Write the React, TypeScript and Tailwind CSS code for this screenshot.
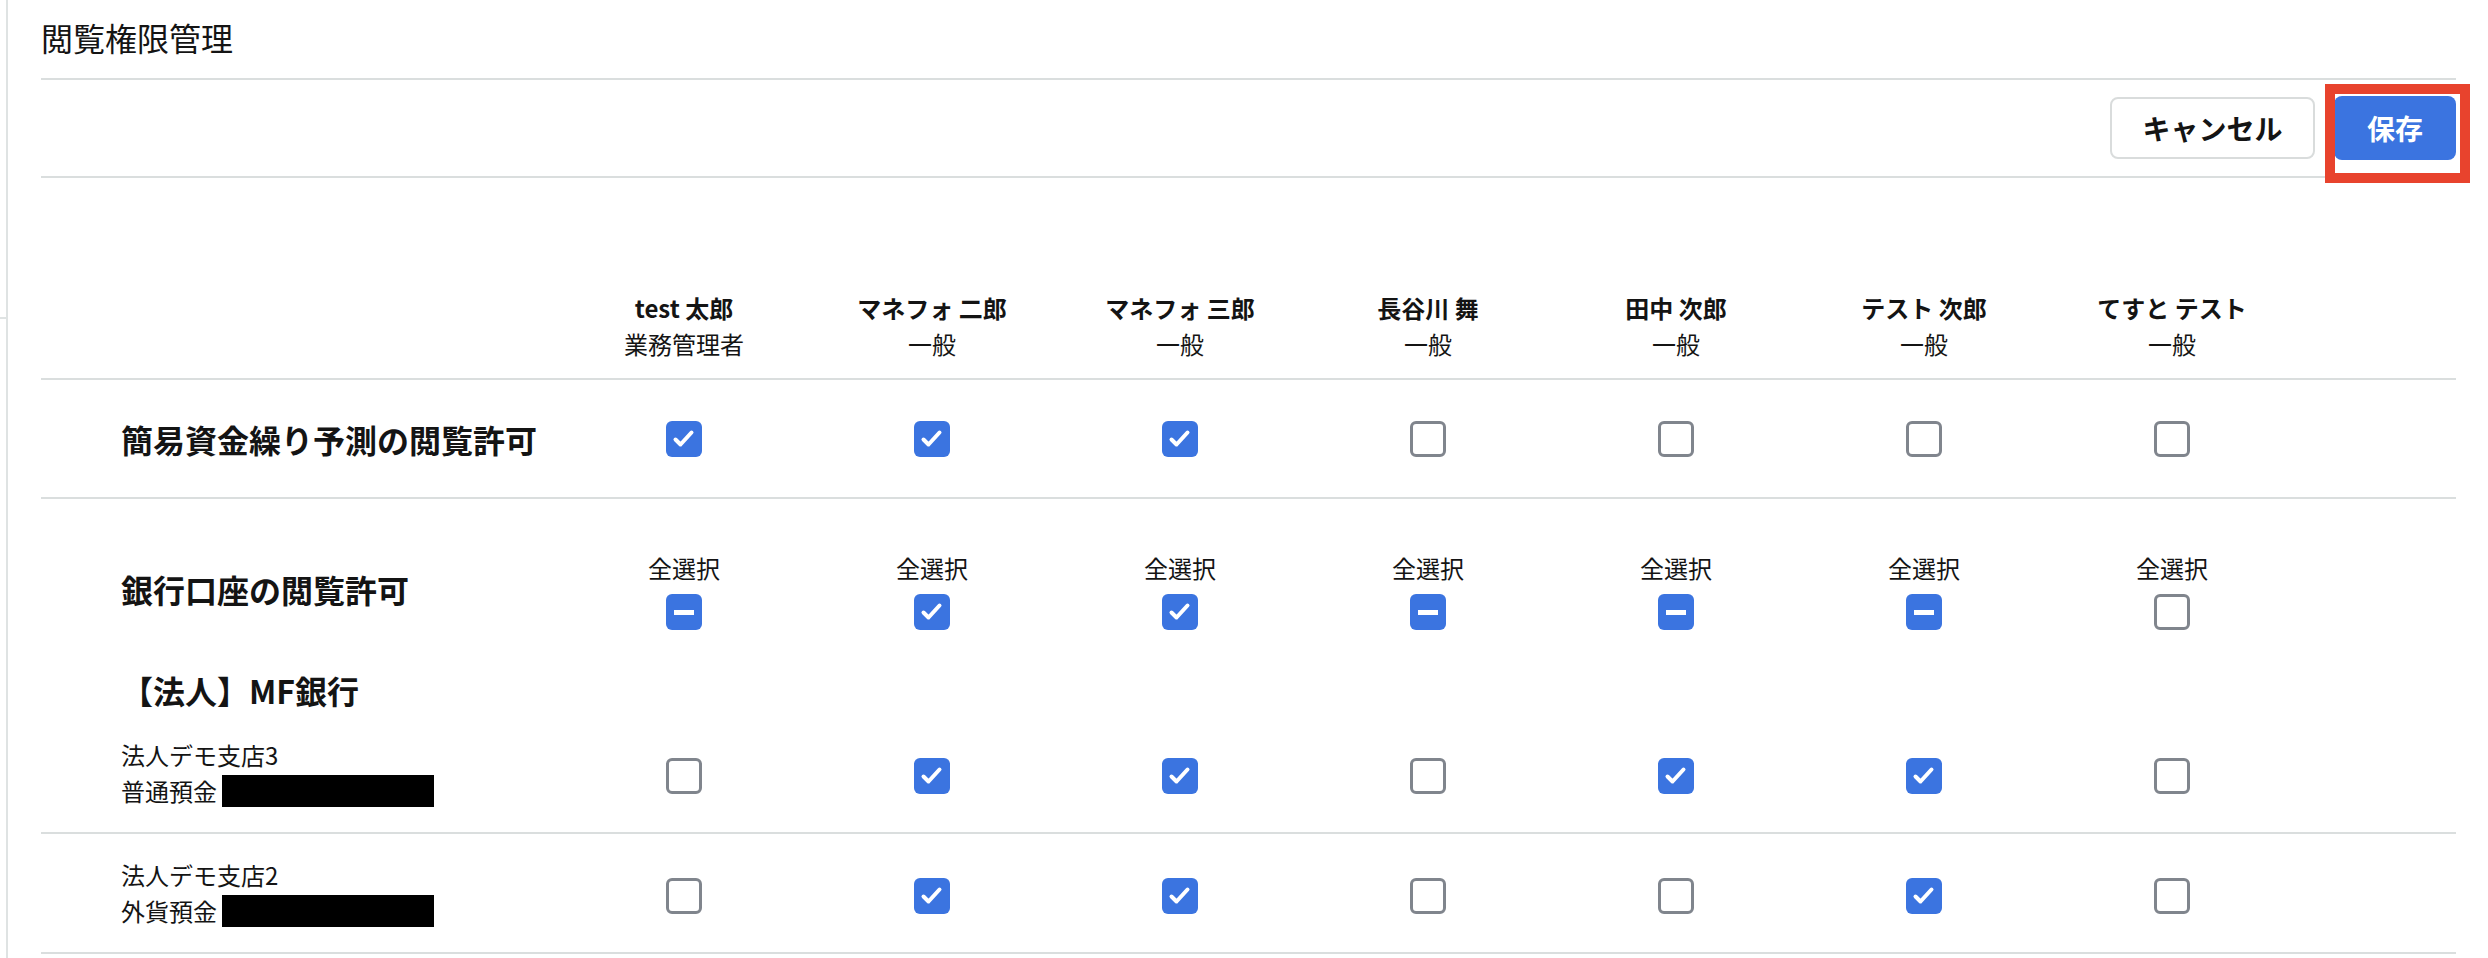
import React from "react";

type S = "on" | "off" | "mid";

const users = [
  { name: "test 太郎", role: "業務管理者" },
  { name: "マネフォ 二郎", role: "一般" },
  { name: "マネフォ 三郎", role: "一般" },
  { name: "長谷川 舞", role: "一般" },
  { name: "田中 次郎", role: "一般" },
  { name: "テスト 次郎", role: "一般" },
  { name: "てすと テスト", role: "一般" },
];

const forecast: S[] = ["on", "on", "on", "off", "off", "off", "off"];
const allSel: S[] = ["mid", "on", "on", "mid", "mid", "mid", "off"];
const accounts: { branch: string; kind: string; states: S[] }[] = [
  { branch: "法人デモ支店3", kind: "普通預金", states: ["off", "on", "on", "off", "on", "on", "off"] },
  { branch: "法人デモ支店2", kind: "外貨預金", states: ["off", "on", "on", "off", "off", "on", "off"] },
];

function Box({ s }: { s: S }) {
  if (s === "on")
    return (
      <div className="w-[36px] h-[36px] rounded-[6px] bg-[#3b74e0] flex items-center justify-center">
        <svg width="36" height="36" viewBox="0 0 36 36">
          <polyline
            points="9.5,18.5 14.5,23.5 25.5,11.5"
            fill="none"
            stroke="white"
            strokeWidth="4"
            strokeLinecap="round"
            strokeLinejoin="round"
          />
        </svg>
      </div>
    );
  if (s === "mid")
    return (
      <div className="w-[36px] h-[36px] rounded-[6px] bg-[#3b74e0] flex items-center justify-center">
        <div className="w-[20px] h-[5px] bg-white" />
      </div>
    );
  return <div className="w-[36px] h-[36px] rounded-[6px] border-[3px] border-[#80858d] bg-white" />;
}

const GRID = "grid grid-cols-[519px_repeat(7,248px)_1fr]";

export default function App() {
  return (
    <div className="flex w-full h-[958px] overflow-hidden bg-white text-[#141414] font-['Noto_Sans_CJK_JP','Liberation_Sans',sans-serif]">
      {/* left sidebar edge */}
      <div className="w-[8px] shrink-0 border-r-2 border-[#dfe3e3]">
        <div className="h-[317px]" />
        <div className="h-[2px] bg-[#dfe3e3]" />
      </div>

      <div className="flex-1 pl-[33px] pr-[32px]">
        {/* title */}
        <div className="h-[80px] pt-[17px] border-b-2 border-[#dadede]">
          <h1 className="text-[32px] leading-[40px] font-normal">閲覧権限管理</h1>
        </div>

        {/* action bar */}
        <div className="h-[98px] flex items-center justify-end gap-[19px] border-b-2 border-[#dadede]">
          <button className="h-[62px] w-[205px] rounded-[8px] border-2 border-[#d9dcdc] bg-white text-[28px] font-bold leading-none">
            キャンセル
          </button>
          <div className="relative">
            <button className="h-[64px] w-[122px] rounded-[8px] bg-[#3b74e0] text-white text-[28px] font-bold leading-none">
              保存
            </button>
            <span className="absolute -left-[9px] -top-[12px] w-[145px] h-[99px] border-[10px] border-[#e8432d] pointer-events-none" />
          </div>
        </div>

        {/* header */}
        <div className={`${GRID} h-[202px] pt-[112px] border-b-2 border-[#dadede]`}>
          <div />
          {users.map((u) => (
            <div key={u.name} className="flex flex-col items-center text-[24px] leading-[36px]">
              <span className="font-bold">{u.name}</span>
              <span>{u.role}</span>
            </div>
          ))}
          <div />
        </div>

        {/* forecast row */}
        <div className={`${GRID} h-[119px] items-center border-b-2 border-[#dadede]`}>
          <div className="pl-[80px] text-[32px] leading-[40px] font-bold">簡易資金繰り予測の閲覧許可</div>
          {forecast.map((s, i) => (
            <div key={i} className="flex justify-center">
              <Box s={s} />
            </div>
          ))}
          <div />
        </div>

        {/* bank section */}
        <div className={`${GRID} items-center pt-[53px]`}>
          <div className="pl-[80px] text-[32px] leading-[40px] font-bold -translate-y-[2px]">銀行口座の閲覧許可</div>
          {allSel.map((s, i) => (
            <div key={i} className="flex flex-col items-center gap-[10px]">
              <span className="text-[24px] leading-[32px]">全選択</span>
              <Box s={s} />
            </div>
          ))}
          <div />
        </div>

        <div className="pl-[80px] mt-[40px] text-[32px] leading-[40px] font-bold">【法人】MF銀行</div>

        {accounts.map((a, idx) => (
          <div
            key={a.branch}
            className={`${GRID} items-center border-b-2 border-[#dadede] ${idx === 0 ? "pt-[27px] pb-[23px]" : "pt-[23px] pb-[23px]"}`}
          >
            <div className="pl-[80px] text-[24px] leading-[36px]">
              <div>{a.branch}</div>
              <div className="flex items-center">
                <span>{a.kind}</span>
                <span className="ml-[5px] inline-block w-[212px] h-[32px] bg-black" />
              </div>
            </div>
            {a.states.map((s, i) => (
              <div key={i} className="flex justify-center translate-y-[3px]">
                <Box s={s} />
              </div>
            ))}
            <div />
          </div>
        ))}
      </div>
    </div>
  );
}
